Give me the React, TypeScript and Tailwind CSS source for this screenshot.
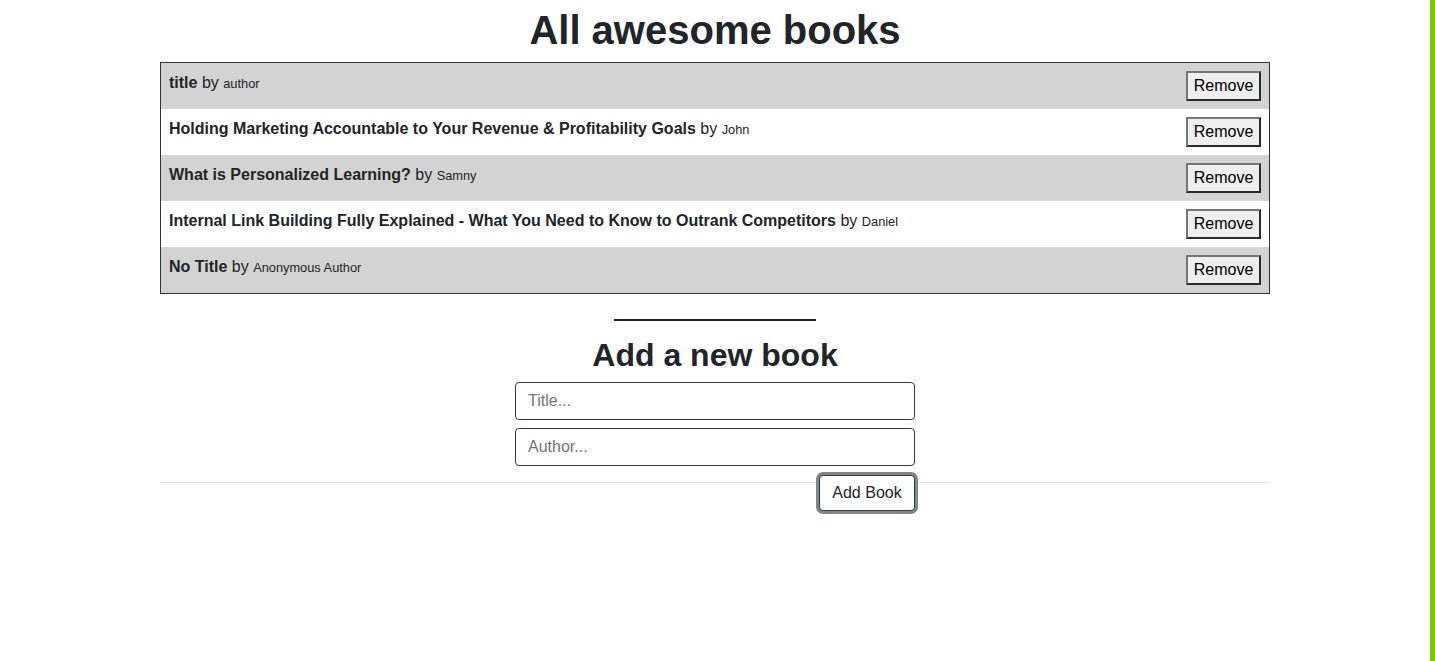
const books = [
  { title: "title", author: "author" },
  { title: "Holding Marketing Accountable to Your Revenue & Profitability Goals", author: "John" },
  { title: "What is Personalized Learning?", author: "Samny" },
  {
    title: "Internal Link Building Fully Explained - What You Need to Know to Outrank Competitors",
    author: "Daniel",
  },
  { title: "No Title", author: "Anonymous Author" },
];

const BookRow = ({ title, author, shaded }: { title: string; author: string; shaded: boolean }) => {
  return (
    <li className={`flex flex-row justify-between items-start p-2 h-[46px] ${shaded ? "bg-[#d3d3d3]" : "bg-white"}`}>
      <p className="text-base leading-6 text-[#212529]">
        <strong className="font-bold">{title}</strong> by <small className="text-[12.8px]">{author}</small>
      </p>
      <button
        type="button"
        className="h-[30px] w-[75px] flex items-center justify-center bg-[#efefef] text-black text-base border-2 border-t-[#767676] border-l-[#767676] border-b-[#2b2b2b] border-r-[#2b2b2b]"
      >
        Remove
      </button>
    </li>
  );
};

const App = () => {
  return (
    <div className="flex flex-row min-h-[661px] bg-white font-['Liberation_Sans',Arial,sans-serif] text-[#212529]">
      <main className="flex-1">
        <div className="w-[1110px] mx-auto">
          <section className="pt-[6px]">
            <h1 className="text-[40px] leading-[48px] font-bold text-center mb-2">All awesome books</h1>
            <ul className="border border-[#333]">
              {books.map((book, i) => (
                <BookRow key={i} title={book.title} author={book.author} shaded={i % 2 === 0} />
              ))}
            </ul>
          </section>

          <div className="w-[202px] h-[2px] bg-[#212529] mx-auto mt-[25px]" />

          <section className="relative flex flex-col items-center mt-[15px]">
            <h2 className="text-[32px] leading-[38px] font-bold text-center mb-2">Add a new book</h2>
            <form className="w-[400px] flex flex-col gap-2 relative z-10">
              <input
                type="text"
                placeholder="Title..."
                className="h-[38px] w-full px-3 border border-[#343a40] rounded-[4px] text-base placeholder:text-[#6c757d] outline-none"
              />
              <input
                type="text"
                placeholder="Author..."
                className="h-[38px] w-full px-3 border border-[#343a40] rounded-[4px] text-base placeholder:text-[#6c757d] outline-none"
              />
              <div className="flex flex-row justify-end pt-px">
                <button
                  type="button"
                  className="h-[36px] w-[96px] bg-white border border-[#343a40] rounded-[4px] text-base text-[#212529] ring-[3px] ring-[#80858a]"
                >
                  Add Book
                </button>
              </div>
            </form>
            <hr className="absolute left-0 right-0 top-[146px] border-t border-[#e6e6e6]" />
          </section>
        </div>
      </main>
      <aside className="w-[5px] bg-[#7bc800]" />
    </div>
  );
};

export default App;
